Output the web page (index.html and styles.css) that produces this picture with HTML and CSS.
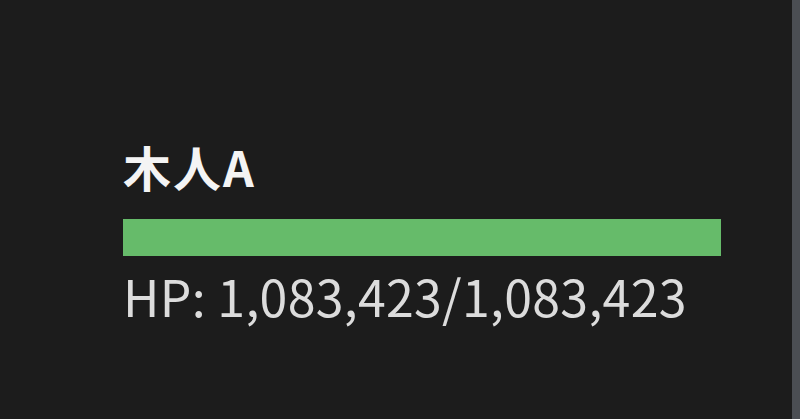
FILE: index.html
```html
<!DOCTYPE html>
<html lang="ja">
<head>
<meta charset="utf-8">
<link rel="stylesheet" href="styles.css">
</head>
<body>
<div class="screen">
  <main class="panel">
    <div class="unit">
      <div class="name">木人A</div>
      <div class="bar"><div class="fill" style="width:100%"></div></div>
      <div class="hp">HP: 1,083,423/1,083,423</div>
    </div>
  </main>
  <div class="edge"></div>
</div>
</body>
</html>
```
FILE: styles.css
```css
html, body {
  margin: 0;
  padding: 0;
  background: #1c1c1c;
}
.screen {
  display: flex;
  width: 800px;
  height: 419px;
  overflow: hidden;
}
.panel {
  flex: 1;
  padding: 138px 0 0 123px;
  box-sizing: border-box;
}
.unit {
  width: 598px;
  font-family: "Noto Sans CJK JP", "Noto Sans", sans-serif;
}
.name {
  color: #f4f4f4;
  font-weight: 700;
  font-size: 48px;
  line-height: 56px;
  letter-spacing: 2px;
}
.bar {
  margin-top: 25px;
  height: 37px;
  background: #3a3a3a;
}
.fill {
  height: 100%;
  background: #66bb6a;
}
.hp {
  color: #dcdcdc;
  font-size: 50px;
  line-height: 58px;
  margin-top: 10px;
  letter-spacing: 0.3px;
}
.edge {
  width: 8px;
  background: #4b4e53;
}
```
